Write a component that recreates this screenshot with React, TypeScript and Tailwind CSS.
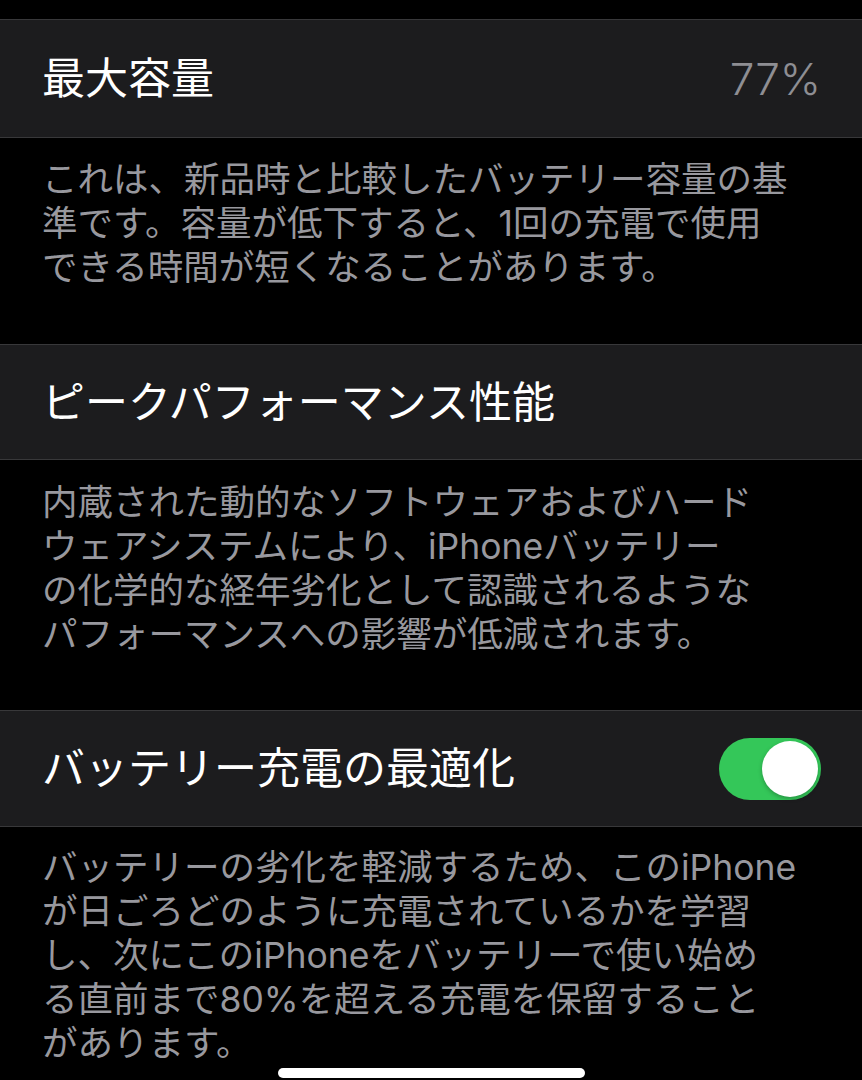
import React from "react";

const font = { fontFamily: 'Inter, "Noto Sans CJK JP", sans-serif' };

function Row({ title, right, h }: { title: string; right?: React.ReactNode; h: string }) {
  return (
    <div className={`flex items-center justify-between border-y border-[#38383a] bg-[#1c1c1e] pl-[42px] pr-[41px] ${h}`}>
      <span className="text-[43px] leading-none text-white whitespace-nowrap">{title}</span>
      {right}
    </div>
  );
}

function Desc({ lines, cls }: { lines: string[]; cls: string }) {
  return (
    <div className={`bg-black pl-[42px] text-[35.5px] leading-[44px] text-[#98989e] ${cls}`}>
      {lines.map((l, i) => (
        <div key={i} className="whitespace-nowrap">{l}</div>
      ))}
    </div>
  );
}

export default function App() {
  return (
    <div className="relative h-[1080px] w-[862px] overflow-hidden bg-black" style={font}>
      <div className="h-[19px]" />
      <Row
        title="最大容量"
        h="h-[119px]"
        right={<span className="text-[44px] font-light leading-none text-[#8e8e93]">77%</span>}
      />
      <Desc
        cls="h-[206px] pt-[20px]"
        lines={[
          "これは、新品時と比較したバッテリー容量の基",
          "準です。容量が低下すると、1回の充電で使用",
          "できる時間が短くなることがあります。",
        ]}
      />
      <Row title="ピークパフォーマンス性能" h="h-[116px]" />
      <Desc
        cls="h-[250px] pt-[21px]"
        lines={[
          "内蔵された動的なソフトウェアおよびハード",
          "ウェアシステムにより、iPhoneバッテリー",
          "の化学的な経年劣化として認識されるような",
          "パフォーマンスへの影響が低減されます。",
        ]}
      />
      <Row
        title="バッテリー充電の最適化"
        h="h-[117px]"
        right={
          <div className="relative h-[62px] w-[102px] rounded-full bg-[#34c759]">
            <div className="absolute right-[3px] top-[3px] h-[56px] w-[56px] rounded-full bg-white shadow-[0_2px_4px_rgba(0,0,0,0.25)]" />
          </div>
        }
      />
      <Desc
        cls="pt-[19px]"
        lines={[
          "バッテリーの劣化を軽減するため、このiPhone",
          "が日ごろどのように充電されているかを学習",
          "し、次にこのiPhoneをバッテリーで使い始め",
          "る直前まで80%を超える充電を保留すること",
          "があります。",
        ]}
      />
      <div className="absolute bottom-[2px] left-[278px] h-[10px] w-[307px] rounded-full bg-white" />
    </div>
  );
}
